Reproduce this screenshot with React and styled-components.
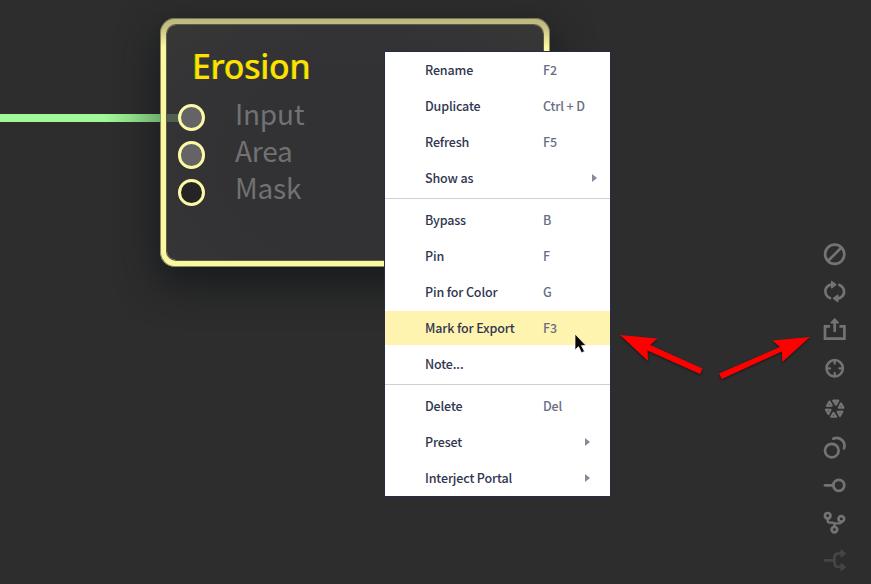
import React from "react";
import styled, { createGlobalStyle } from "styled-components";

const GlobalStyle = createGlobalStyle`
  * { box-sizing: border-box; }
  body { margin: 0; background: #2d2d2d; overflow: hidden; }
`;

const Canvas = styled.main`
  position: relative;
  width: 871px;
  height: 584px;
  overflow: hidden;
  background: #2d2d2d;
  font-family: "Noto Sans CJK SC", "Noto Sans", sans-serif;
`;

const Node = styled.section`
  position: absolute;
  left: 160px;
  top: 18px;
  width: 390px;
  height: 249px;
  padding: 7px;
  border-radius: 15px;
  background: linear-gradient(180deg, #bcb77f 0, #c3be84 8px, #fbf8a2 29px);
  box-shadow: 0 15px 38px 3px rgba(22, 24, 28, 0.9), inset 0 0 0 1px rgba(91, 91, 64, 0.7);
`;

const NodeBody = styled.div`
  height: 100%;
  padding: 17px 0 0 11px;
  border-radius: 9px;
  background: radial-gradient(ellipse at 50% 60%, #323234 0 45%, #343436 75%, #373737 100%);
  box-shadow: 0 0 0 1px #5c5b43;
`;

const Wire = styled.div`
  position: absolute;
  left: 0;
  top: 114px;
  width: 179px;
  height: 8px;
  background: linear-gradient(90deg, #a0f898 0 105px, #8fdd88 130px, #72ae70 160px, #4e6751 167px, #4c5a4c);
`;

const WireShade = styled(Wire)`
  left: 167px;
  width: 12px;
  background: #4e6150;
`;

const Title = styled.h1`
  margin: 0 0 9px 14px;
  color: #ffe000;
  font: 500 34px/48px "Noto Sans", sans-serif;
  letter-spacing: -0.4px;
  text-shadow: -0.7px 0 0 rgba(90, 190, 0, 0.6);
`;

const PortRow = styled.div`
  display: flex;
  align-items: center;
  gap: 29.5px;
  height: 37.3px;
  position: relative;
  z-index: 1;
`;

const Port = styled.i`
  width: 27.4px;
  height: 27.4px;
  border: 3px solid #fcf9a4;
  border-radius: 50%;
  background: ${({ $open }) => ($open ? "#242424" : "#646466")};
`;

const PortLabel = styled.span`
  margin-top: -9px;
  color: #717173;
  font-size: 28px;
  letter-spacing: -0.15px;
  line-height: 37px;
`;

const Menu = styled.nav`
  position: absolute;
  left: 385px;
  top: 52px;
  width: 225px;
  height: 444px;
  background: #fff;
  box-shadow: 0 0 0 1px #252b48;
`;

const MenuItem = styled.div`
  display: grid;
  grid-template-columns: 118px 1fr;
  align-items: center;
  height: 36px;
  padding-left: 40px;
  color: #30364f;
  font-size: 12.5px;
  font-weight: 500;
  letter-spacing: -0.15px;
  line-height: 18px;
  background: ${({ $active }) => ($active ? "linear-gradient(#fff 0 1px, #fff3b0 1px 35px, #fff 35px)" : "none")};
`;

const Shortcut = styled.span`
  color: #696e83;
`;

const Chevron = styled.i`
  justify-self: end;
  margin-right: ${({ $inset }) => $inset}px;
  border-left: 5px solid #888b99;
  border-top: 4px solid transparent;
  border-bottom: 4px solid transparent;
`;

const Separator = styled.hr`
  height: 1px;
  margin: 2px 0 3px;
  border: 0;
  background: #cfd1d6;
`;

const Tools = styled.aside`
  position: absolute;
  left: 822px;
  top: 242px;
  color: #737373;
`;

const Tool = styled.div`
  height: ${({ $height }) => $height}px;
  opacity: ${({ $dim }) => ($dim ? 0.34 : 1)};
  svg { display: block; overflow: visible; }
`;

const Annotation = styled.svg`
  position: absolute;
  left: 610px;
  top: 320px;
  filter: drop-shadow(0 1px 1px #161616);
`;

const Pointer = styled.svg`
  position: absolute;
  left: 574px;
  top: 333px;
`;

const WireClip = styled.div`
  position: absolute;
  left: 0;
  top: 0;
  width: 161px;
  height: 140px;
  overflow: hidden;
`;

const menuGroups = [
  [["Rename", "F2"], ["Duplicate", "Ctrl + D"], ["Refresh", "F5"], ["Show as", null, 13]],
  [["Bypass", "B"], ["Pin", "F"], ["Pin for Color", "G"], ["Mark for Export", "F3"], ["Note..."]],
  [["Delete", "Del"], ["Preset", null, 20], ["Interject Portal", null, 20]],
];

const tools = [
  { name: "disable", height: 38, art: <><circle cx="12.7" cy="12.3" r="9.6"/><path d="M6.2 18.8 19.2 5.8"/></> },
  { name: "refresh", height: 38, art: <><path d="M8 18.1C2.2 15.6 1.8 8 7.2 5.3q1.4-.7 3-.7M17.4 4.9c5.8 2.5 6.2 10.1.8 12.8q-1.4.7-3 .7"/><path d="m9.7 1.5 4.1 3.1-4.1 3.1zM15.7 15.3l-4.1 3.1 4.1 3.1z" fill="currentColor" strokeWidth="1.5"/></> },
  { name: "export", height: 38, art: <><path d="M8 8.3H3v12.4h19.4V8.3h-5" strokeLinejoin="miter" strokeLinecap="butt"/><path d="M12.7 13V4"/><path d="m12.7.9 3.6 3.8H9.1z" fill="currentColor" strokeWidth="1.5"/></> },
  { name: "target", height: 41, art: <><circle cx="12.7" cy="12.3" r="8.2" strokeWidth="2.5"/><path d="M12.7 4.5v3.2M12.7 16.9v3.2M4.9 12.3h3.2M17.3 12.3h3.2" strokeWidth="2.2"/></> },
  { name: "aperture", height: 38, art: [0, 60, 120, 180, 240, 300].map((angle) => <path key={angle} d="M11.2 3.6h5.1l-2.4 4z" strokeWidth="2.1" transform={`rotate(${angle} 12.7 11.7)`}/>) },
  { name: "duplicate", height: 38, art: <><circle cx="9.8" cy="15.6" r="6.8"/><path d="M11.2 3.7c6-3 13.2 2.9 10.8 9.7"/></> },
  { name: "endpoint", height: 38, art: <><circle cx="16.8" cy="12.3" r="5.5"/><path d="M3 12.3h8.2"/></> },
  { name: "branch", height: 38, art: <><circle cx="5.7" cy="4.8" r="2.8"/><circle cx="19.3" cy="7.9" r="2.8"/><circle cx="12.4" cy="18.6" r="2.8"/><path d="M5.7 7.6v2.2q0 1.9 1.9 1.9h2.9q1.9 0 1.9 1.9v2M19.3 10.8q0 1.6-1.9 1.6h-3.3q-1.7 0-1.7 1.5" strokeWidth="2.3"/></> },
  { name: "split", height: 38, dim: true, art: <><path d="M3 11.3h9.2M19 4.5h-2.5q-4 0-4 4V14q0 4 4 4H19"/><path d="m19.2 1.3 4 3.2-4 3.2zM19.2 14.8l4 3.2-4 3.2z" fill="currentColor" strokeWidth="1.5"/></> },
];

function WireLayer() {
  return (
    <>
      <WireClip><Wire /></WireClip>
      <WireShade />
    </>
  );
}

export default function App() {
  return (
    <Canvas>
      <GlobalStyle />
      <Node>
        <NodeBody>
          <Title>Erosion</Title>
          {["Input", "Area", "Mask"].map((label) => (
            <PortRow key={label}>
              <Port $open={label === "Mask"} />
              <PortLabel>{label}</PortLabel>
            </PortRow>
          ))}
        </NodeBody>
      </Node>
      <WireLayer />
      <Menu>
        {menuGroups.map((group, index) => (
          <React.Fragment key={index}>
            {index > 0 && <Separator />}
            {group.map(([label, shortcut, inset]) => (
              <MenuItem key={label} $active={label === "Mark for Export"}>
                <span>{label}</span>
                {shortcut && <Shortcut>{shortcut}</Shortcut>}
                {inset && <Chevron $inset={inset} />}
              </MenuItem>
            ))}
          </React.Fragment>
        ))}
      </Menu>
      <Tools>
        {tools.map(({ name, height, dim, art }) => (
          <Tool key={name} $height={height} $dim={dim}>
            <svg width="26" height="25" fill="none" stroke="currentColor" strokeWidth="2.7" strokeLinecap="round" strokeLinejoin="round">{art}</svg>
          </Tool>
        ))}
      </Tools>
      <Annotation width="210" height="70" fill="#ff0000">
        <path d="m10 15 37.5 3.5-7.5 6.5 52.5 23.5-2.5 5.5-52.5-23.5.5 10.5zM200 17l-37.5 3.5 7.5 6.5L109 53.5l2.8 5.5 60-27.5.5 10.5z" />
      </Annotation>
      <Pointer width="15" height="21" fill="#080808" stroke="#fff" strokeWidth=".7">
        <path d="M1 1v16l3.5-3.4 3 6.2 3-1.4-3-5.8H12z" />
      </Pointer>
    </Canvas>
  );
}
